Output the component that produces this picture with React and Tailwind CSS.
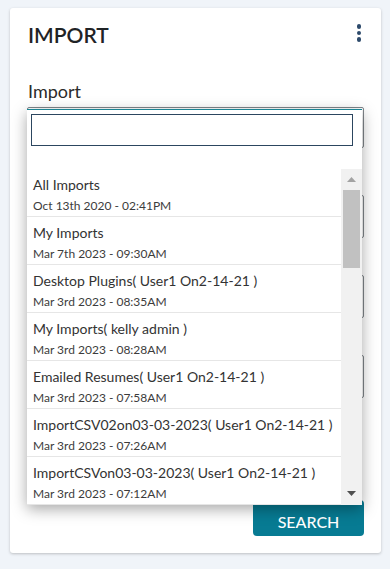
const items = [
  { name: "All Imports", date: "Oct 13th 2020 - 02:41PM" },
  { name: "My Imports", date: "Mar 7th 2023 - 09:30AM" },
  { name: "Desktop Plugins( User1 On2-14-21 )", date: "Mar 3rd 2023 - 08:35AM" },
  { name: "My Imports( kelly admin )", date: "Mar 3rd 2023 - 08:28AM" },
  { name: "Emailed Resumes( User1 On2-14-21 )", date: "Mar 3rd 2023 - 07:58AM" },
  { name: "ImportCSV02on03-03-2023( User1 On2-14-21 )", date: "Mar 3rd 2023 - 07:26AM" },
  { name: "ImportCSVon03-03-2023( User1 On2-14-21 )", date: "Mar 3rd 2023 - 07:12AM" },
];

const App = () => {
  return (
    <main
      className="min-h-[569px] bg-[#f0f4f9] pt-[8px] pl-[10px] pr-[9px]"
      style={{ fontFamily: "Lato, 'Noto Sans', sans-serif" }}
    >
      <div className="h-[545px] bg-white rounded-[3px] shadow-[0_1px_3px_rgba(0,0,0,0.22)] px-[17px] pt-[13px]">
        {/* Header */}
        <div className="flex items-start justify-between">
          <h1 className="text-[21px] leading-[28px] font-semibold text-[#1f2326] pl-[1px]">IMPORT</h1>
          <div className="flex flex-col gap-[2px] pt-[3px] pr-[3px]">
            <span className="w-[4.5px] h-[4.5px] rounded-full bg-[#2d4a6b]" />
            <span className="w-[4.5px] h-[4.5px] rounded-full bg-[#2d4a6b]" />
            <span className="w-[4.5px] h-[4.5px] rounded-full bg-[#2d4a6b]" />
          </div>
        </div>

        {/* Form */}
        <div className="relative mt-[30px]">
          <label className="block text-[18px] leading-[24px] text-[#2b2b2b] pl-[1px]">Import</label>
          <div className="mt-[4px] h-[41px] border border-[#80868b] rounded-[2px]" />

          <div className="mt-[47px] h-[43px] border border-[#80868b] rounded-[2px]" />
          <div className="mt-[37px] h-[43px] border border-[#80868b] rounded-[2px]" />
          <div className="mt-[37px] h-[43px] border border-[#80868b] rounded-[2px]" />

          <div className="flex justify-end mt-[102px]">
            <button className="w-[111px] h-[36px] rounded-[4px] bg-[#077b93] text-white text-[16px] pt-[8px] font-medium">
              SEARCH
            </button>
          </div>

          {/* Dropdown overlay */}
          <div className="absolute left-0 top-[30px] w-[335px] h-[396px] bg-white border-t border-[#1a8594] shadow-[0_4px_14px_rgba(0,0,0,0.35)] flex flex-col">
            <div className="pt-[4px] pl-[4px]">
              <input
                className="block w-[322px] h-[32px] border border-[#2c4660] outline-none px-[6px] text-[14px]"
                type="text"
              />
            </div>
            <div className="mt-[23px] flex flex-1 overflow-hidden">
              <ul className="flex-1">
                {items.map((it) => (
                  <li
                    key={it.name + it.date}
                    className="h-[48px] border-b border-[#e6e6e6] pl-[6px] pt-[6px]"
                  >
                    <div className="text-[14px] leading-[20px] text-[#333333] whitespace-nowrap">{it.name}</div>
                    <div className="mt-[3px] text-[12px] leading-[16px] text-[#3c3c3c] whitespace-nowrap">{it.date}</div>
                  </li>
                ))}
              </ul>
              <div className="w-[21px] bg-[#f1f1f1] flex flex-col items-center">
                <div className="h-[21px] flex items-center justify-center">
                  <svg width="9" height="5" viewBox="0 0 9 5">
                    <path d="M0 5 L4.5 0 L9 5 Z" fill="#a3a3a3" />
                  </svg>
                </div>
                <div className="w-[17px] h-[78px] bg-[#c1c1c1]" />
                <div className="flex-1" />
                <div className="h-[24px] flex items-center justify-center">
                  <svg width="9" height="5" viewBox="0 0 9 5">
                    <path d="M0 0 L9 0 L4.5 5 Z" fill="#505050" />
                  </svg>
                </div>
              </div>
            </div>
          </div>
        </div>
      </div>
    </main>
  );
};

export default App;
